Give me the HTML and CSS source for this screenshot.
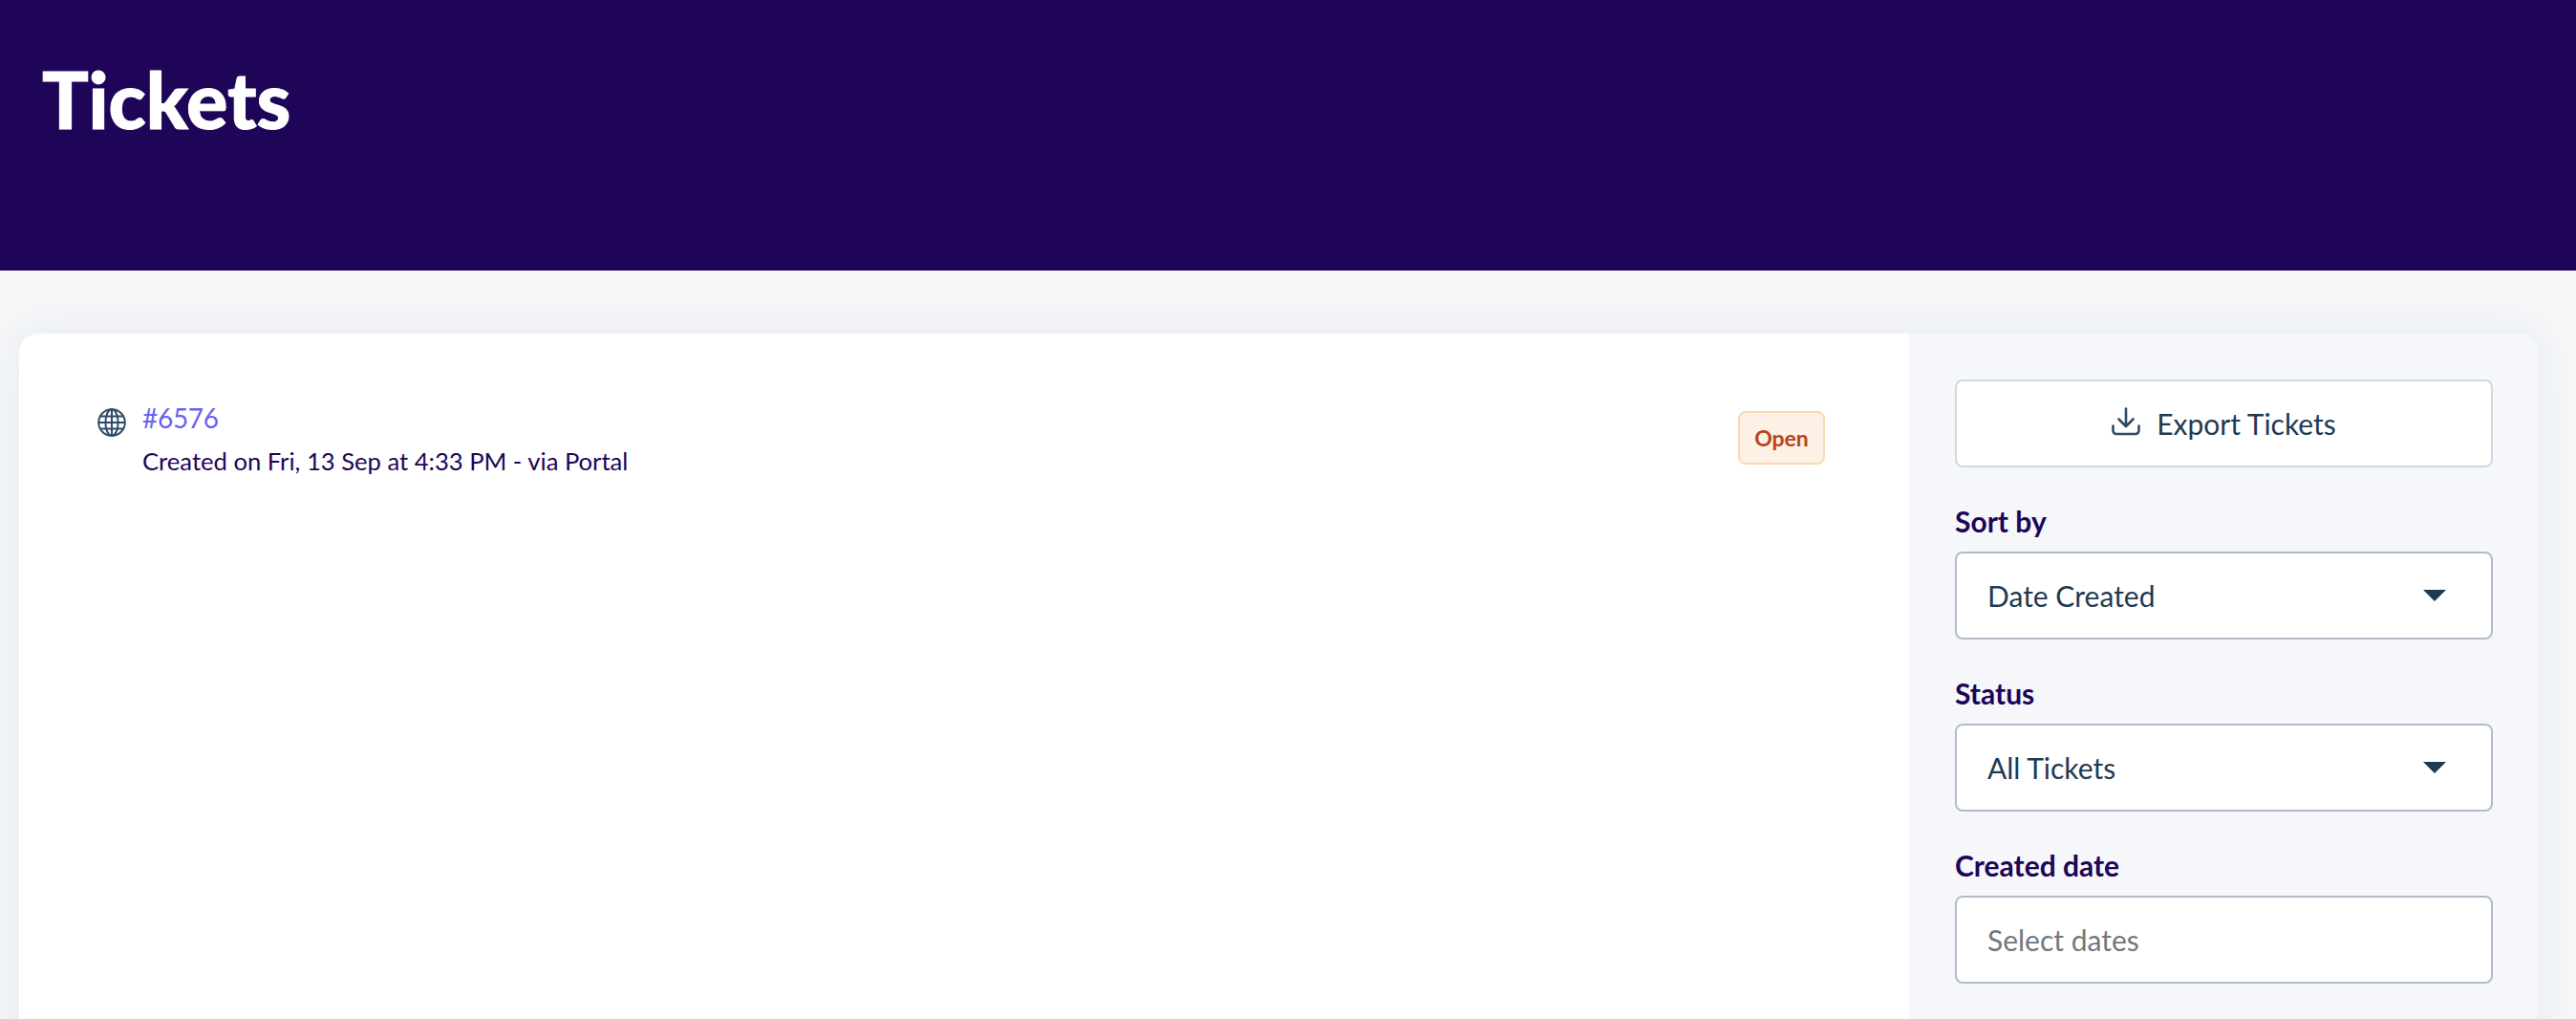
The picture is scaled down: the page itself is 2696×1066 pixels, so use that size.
FILE: index.html
```html
<!DOCTYPE html>
<html lang="en">
<head>
    <meta charset="UTF-8">
    <meta name="viewport" content="width=device-width, initial-scale=1.0">
    <title>Tickets</title>
    <link rel="stylesheet" href="styles.css">
</head>
<body>
    <header class="banner">
        <h1>Tickets</h1>
    </header>
    <div class="content">
        <div class="card">
            <main class="tickets">
                <div class="ticket">
                    <svg class="globe" viewBox="0 0 30 30" fill="none" stroke="#2f4b66" stroke-width="2">
                        <circle cx="15" cy="15" r="13.8"/>
                        <ellipse cx="15" cy="15" rx="6.6" ry="13.8"/>
                        <path d="M15 1.2V28.8M1.2 15H28.8M3.2 8.6H26.8M3.2 21.4H26.8"/>
                    </svg>
                    <div class="ticket-info">
                        <a class="ticket-id">#6576</a>
                        <p class="ticket-meta">Created on Fri, 13 Sep at 4:33 PM - via Portal</p>
                    </div>
                    <span class="badge">Open</span>
                </div>
            </main>
            <aside class="filters">
                <button class="export-btn">
                    <svg class="download" viewBox="0 0 30 30" fill="none" stroke="#2f4b66" stroke-width="2.6" stroke-linecap="round" stroke-linejoin="round">
                        <path d="M15 1.5V19.5M7.5 12.5L15 20L22.5 12.5"/>
                        <path d="M1.5 19.5V24.5A3.5 3.5 0 0 0 5 28H25A3.5 3.5 0 0 0 28.5 24.5V19.5"/>
                    </svg>
                    Export Tickets
                </button>
                <div class="field">
                    <label>Sort by</label>
                    <div class="select">Date Created<span class="caret"></span></div>
                </div>
                <div class="field">
                    <label>Status</label>
                    <div class="select">All Tickets<span class="caret"></span></div>
                </div>
                <div class="field">
                    <label>Created date</label>
                    <div class="select placeholder">Select dates</div>
                </div>
            </aside>
        </div>
    </div>
</body>
</html>
```

FILE: styles.css
```css
html, body { margin: 0; height: 100%; overflow: hidden; }
body { font-family: "Lato", "Noto Sans", sans-serif; background: #f5f7f9; color: #1f3a52; }
p, h1 { margin: 0; }

.banner { height: 283px; background: #1e0558; padding: 61px 0 0 44px; box-sizing: border-box; }
.banner h1 { color: #fff; font-size: 81px; line-height: 86px; font-weight: 900; -webkit-text-stroke: 1px #fff; }

.content { padding: 66px 40px 0 20px; }
.card { display: flex; min-height: 900px; background: #fff; border-radius: 20px; box-shadow: 0 0 48px rgba(40, 60, 90, 0.07); overflow: hidden; }

.tickets { flex: 1; padding: 68px 88px 0 82px; }
.ticket { display: flex; align-items: flex-start; }
.globe { width: 30px; height: 30px; margin: 10px 17px 0 0; flex: none; }
.ticket-info { flex: 1; }
.ticket-id { display: block; color: #6a63f0; font-size: 28px; line-height: 40px; letter-spacing: -0.3px; }
.ticket-meta { margin-top: 4px; color: #1e0558; font-size: 25.6px; line-height: 42px; }
.badge { margin-top: 13px; width: 91px; height: 56px; box-sizing: border-box; display: flex; align-items: center; justify-content: center; background: #fcf1e4; border: 2px solid #f9d9b4; border-radius: 8px; color: #b8431f; font-size: 23px; font-weight: 700; }

.filters { width: 658px; flex: none; box-sizing: border-box; background: #f5f7fa; padding: 48px 47px 0 48px; }
.export-btn { display: flex; align-items: center; justify-content: center; gap: 17px; width: 100%; height: 92px; background: #fff; border: 2px solid #d1d8e2; border-radius: 8px; font: inherit; font-size: 30px; color: #1f3a52; }
.download { width: 30px; height: 30px; flex: none; margin-top: -5px; }

.field { margin-top: 32px; }
.field label { display: block; margin-bottom: 8px; color: #1e0558; font-size: 30px; line-height: 48px; font-weight: 700; }
.select { display: flex; align-items: center; justify-content: space-between; height: 92px; box-sizing: border-box; padding: 0 47px 0 32px; background: #fff; border: 2px solid #b1bccb; border-radius: 8px; font-size: 30px; }
.placeholder { color: #70787f; }
.caret { width: 0; height: 0; border-left: 12px solid transparent; border-right: 12px solid transparent; border-top: 12px solid #1f3a52; }
```
